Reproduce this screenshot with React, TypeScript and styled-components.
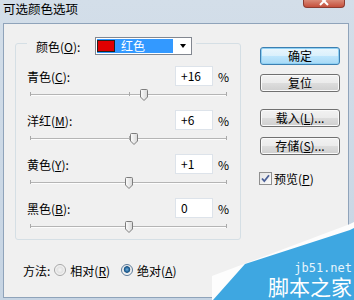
import React from "react";
import styled, { createGlobalStyle } from "styled-components";

const GlobalStyle = createGlobalStyle`
  html, body { margin: 0; padding: 0; background: #fff; }
  body {
    font-family: "Noto Sans CJK SC", "Noto Sans", sans-serif;
    font-size: 12px;
    color: #000;
  }
  #root { width: 354px; height: 300px; overflow: hidden; }
`;

const channels = [
  { name: "青色", key: "C", value: 16 },
  { name: "洋红", key: "M", value: 6 },
  { name: "黄色", key: "Y", value: 1 },
  { name: "黑色", key: "B", value: 0 },
];

const fmt = (v: number) => (v > 0 ? `+${v}` : `${v}`);

export default function App() {
  return (
    <>
      <GlobalStyle />
      <Window>
        <TitleBar>
          <Title>可选颜色选项</Title>
          <CloseBtn>
            <svg width="12" height="8" viewBox="0 0 12 8">
              <path d="M2 -3 L10 5 M10 -3 L2 5" stroke="#fff" strokeWidth="2" />
            </svg>
          </CloseBtn>
        </TitleBar>
        <Panel>
          <LeftCol>
            <Group>
              <Legend>
                <LegendLabel>
                  颜色(<u>O</u>):
                </LegendLabel>
                <Dropdown>
                  <Selected>
                    <Swatch />
                    <SelText>红色</SelText>
                  </Selected>
                  <ArrowBox>
                    <Arrow />
                  </ArrowBox>
                </Dropdown>
              </Legend>
              <Sections>
                {channels.map((c) => (
                  <Section key={c.key}>
                    <InputRow>
                      <Label>
                        {c.name}(<u>{c.key}</u>):
                      </Label>
                      <ValueBox>{fmt(c.value)}</ValueBox>
                      <Percent>%</Percent>
                    </InputRow>
                    <SliderRow>
                      <Track />
                      <Tick $pos="start" />
                      <Tick $pos="center" />
                      <Tick $pos="end" />
                      <Thumb style={{ left: `calc(${(c.value + 100) / 2}% - 4px)` }}>
                        <svg width="8" height="12" viewBox="0 0 8 12">
                          <defs>
                            <linearGradient id={`tg${c.key}`} x1="0" y1="0" x2="1" y2="0">
                              <stop offset="0" stopColor="#fdfdfd" />
                              <stop offset="1" stopColor="#d8d8d8" />
                            </linearGradient>
                          </defs>
                          <path
                            d="M0.5 1.5 Q0.5 0.5 1.5 0.5 H6.5 Q7.5 0.5 7.5 1.5 V8 L4 11.5 L0.5 8 Z"
                            fill={`url(#tg${c.key})`}
                            stroke="#7d7d7d"
                          />
                        </svg>
                      </Thumb>
                    </SliderRow>
                  </Section>
                ))}
              </Sections>
            </Group>
            <MethodRow>
              <span>方法:</span>
              <Radio $checked={false} />
              <RadioLabel>
                相对(<u>R</u>)
              </RadioLabel>
              <Radio $checked $spaced />
              <RadioLabel>
                绝对(<u>A</u>)
              </RadioLabel>
            </MethodRow>
          </LeftCol>
          <RightCol>
            <Button $primary>确定</Button>
            <Button $gap={9}>复位</Button>
            <Button $gap={17}>
              载入(<u>L</u>)...
            </Button>
            <Button $gap={10}>
              存储(<u>S</u>)...
            </Button>
            <CheckRow>
              <CheckBox>
                <svg width="11" height="11" viewBox="0 0 11 11">
                  <path d="M2 5.5 L4.3 8.2 L9 2.2" fill="none" stroke="#4a5f97" strokeWidth="1.8" />
                </svg>
              </CheckBox>
              <CheckLabel>
                预览(<u>P</u>)
              </CheckLabel>
            </CheckRow>
          </RightCol>
        </Panel>
        <Watermark>
          <svg width="142" height="80" viewBox="0 0 142 80">
            <polygon points="0,80 0,56 138,4 142,2 142,80" fill="#fdfdfd" />
            <polygon points="1,80 33,44 138,10 142,8 142,80" fill="#3ea7e1" />
          </svg>
          <MarkSite>jb51.net</MarkSite>
          <MarkName>脚本之家</MarkName>
        </Watermark>
      </Window>
    </>
  );
}

const Window = styled.div`
  position: relative;
  width: 354px;
  height: 300px;
  display: flex;
  flex-direction: column;
  background: linear-gradient(#d3dee9, #c6d4e3);
  overflow: hidden;
`;

const TitleBar = styled.div`
  height: 23px;
  display: flex;
  align-items: flex-start;
  padding-left: 3px;
`;

const Title = styled.div`
  line-height: 17px;
  font-size: 12.5px;
`;

const CloseBtn = styled.div`
  margin-left: auto;
  margin-right: 9px;
  width: 42px;
  height: 8px;
  box-sizing: border-box;
  border: 1px solid #8c3b30;
  border-top: none;
  border-radius: 0 0 4px 4px;
  background: linear-gradient(#d98977, #c5503c);
  display: flex;
  justify-content: center;
  overflow: hidden;
`;

const Panel = styled.div`
  flex: 1;
  display: flex;
  margin: 0 5px 2px 3px;
  border: 1px solid #8fa3ba;
  background: #f0f0f0;
`;

const LeftCol = styled.div`
  margin-left: 11px;
  padding-top: 19px;
  width: 226px;
  display: flex;
  flex-direction: column;
`;

const Group = styled.div`
  box-sizing: border-box;
  width: 226px;
  border: 1px solid #d5dfe5;
  border-radius: 3px;
  padding-bottom: 1px;
  display: flex;
  flex-direction: column;
`;

const Legend = styled.div`
  align-self: flex-start;
  display: flex;
  align-items: center;
  margin: -7px 0 0 11px;
  padding: 0 4px 0 9px;
  background: #f0f0f0;
`;

const LegendLabel = styled.span`
  width: 59px;
`;

const Dropdown = styled.div`
  box-sizing: border-box;
  width: 97px;
  height: 18px;
  border: 1px solid #828790;
  background: #fff;
  display: flex;
`;

const Selected = styled.div`
  flex: 1;
  margin: 1px;
  background: #3399ff;
  display: flex;
  align-items: center;
`;

const Swatch = styled.div`
  box-sizing: border-box;
  width: 18px;
  height: 12px;
  background: #e00000;
  border: 1px solid #222;
`;

const SelText = styled.span`
  color: #fff;
  margin-left: 6px;
  line-height: 14px;
`;

const ArrowBox = styled.div`
  width: 17px;
  display: flex;
  align-items: center;
  justify-content: center;
`;

const Arrow = styled.div`
  width: 0;
  height: 0;
  border-left: 3.5px solid transparent;
  border-right: 3.5px solid transparent;
  border-top: 4px solid #000;
`;

const Sections = styled.div`
  margin-top: 11px;
  display: flex;
  flex-direction: column;
  gap: 4px;
`;

const Section = styled.div`
  display: flex;
  flex-direction: column;
`;

const InputRow = styled.div`
  height: 20px;
  display: flex;
  align-items: center;
  padding: 0 12px 0 11px;
`;

const Label = styled.span`
  flex: 1;
`;

const ValueBox = styled.div`
  box-sizing: border-box;
  width: 38px;
  height: 20px;
  border: 1px solid #dde3ea;
  background: #fff;
  padding-left: 5px;
  line-height: 18px;
`;

const Percent = styled.span`
  width: 10px;
  margin-left: 5px;
`;

const SliderRow = styled.div`
  position: relative;
  height: 20px;
  margin: 0 13px 0 14px;
`;

const Track = styled.div`
  position: absolute;
  left: 0;
  right: 0;
  top: 8px;
  height: 1px;
  background: #b5b5b5;
  box-shadow: 0 1px 0 #fdfdfd;
`;

const Tick = styled.div<{ $pos: "start" | "center" | "end" }>`
  position: absolute;
  top: 6px;
  width: 1px;
  height: 4px;
  background: #a9a9a9;
  left: ${(p) => (p.$pos === "start" ? "0" : p.$pos === "center" ? "50%" : "auto")};
  right: ${(p) => (p.$pos === "end" ? "0" : "auto")};
`;

const Thumb = styled.div`
  position: absolute;
  top: 3px;
  width: 8px;
  height: 12px;
  display: flex;
`;

const MethodRow = styled.div`
  margin: 22px 0 0 8px;
  height: 16px;
  display: flex;
  align-items: center;
`;

const Radio = styled.span<{ $checked: boolean; $spaced?: boolean }>`
  box-sizing: border-box;
  width: 12px;
  height: 12px;
  margin-left: ${(p) => (p.$spaced ? "11px" : "4px")};
  border-radius: 50%;
  border: 1px solid ${(p) => (p.$checked ? "#5b7a99" : "#a6a6a6")};
  background: ${(p) =>
    p.$checked
      ? "radial-gradient(circle at 50% 45%, #6fb1e0 0, #1d5b8f 2.5px, #245d8c 3px, #e6e6e6 3.6px, #f7f7f7 5px)"
      : "radial-gradient(circle at 50% 50%, #f4f4f4 0, #e2e2e2 3px, #f7f7f7 5px)"};
`;

const RadioLabel = styled.span`
  margin-left: 4px;
`;

const RightCol = styled.div`
  margin-left: 19px;
  padding-top: 23px;
  width: 80px;
  display: flex;
  flex-direction: column;
`;

const Button = styled.div<{ $primary?: boolean; $gap?: number }>`
  box-sizing: border-box;
  height: 18px;
  margin-top: ${(p) => p.$gap ?? 0}px;
  border: 1px solid ${(p) => (p.$primary ? "#3c7fb1" : "#707070")};
  border-radius: 3px;
  background: ${(p) =>
    p.$primary
      ? "linear-gradient(#eaf6fd 0%, #d9f0fc 50%, #bee6fd 50%, #a7d9f5 100%)"
      : "linear-gradient(#f2f2f2 0%, #ebebeb 50%, #dddddd 50%, #cfcfcf 100%)"};
  box-shadow: ${(p) => (p.$primary ? "inset 0 0 0 1px #8fd0f3" : "inset 0 0 0 1px #fafafa")};
  display: flex;
  align-items: center;
  justify-content: center;
  line-height: 16px;
`;

const CheckRow = styled.div`
  margin: 16px 0 0 -1px;
  height: 15px;
  display: flex;
  align-items: center;
`;

const CheckBox = styled.span`
  box-sizing: border-box;
  width: 13px;
  height: 13px;
  border: 1px solid #8f8f8f;
  background: linear-gradient(135deg, #e4e4e4, #fbfbfb);
  display: flex;
  align-items: center;
  justify-content: center;
`;

const CheckLabel = styled.span`
  margin-left: 2px;
`;

const Watermark = styled.div`
  position: absolute;
  right: 0;
  bottom: 0;
  width: 142px;
  height: 80px;
`;

const MarkSite = styled.div`
  position: absolute;
  right: 2px;
  top: 42px;
  font-family: "DejaVu Sans Mono", monospace;
  font-size: 12px;
  line-height: 12px;
  color: #e6f4fc;
`;

const MarkName = styled.div`
  position: absolute;
  right: 2px;
  top: 55px;
  font-size: 21px;
  line-height: 22px;
  color: #fff;
  white-space: nowrap;
`;
